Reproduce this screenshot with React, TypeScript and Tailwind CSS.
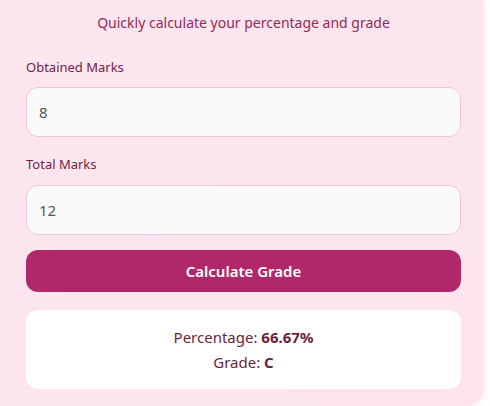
import React, { useState } from 'react';

export default function App() {
  const [obtained, setObtained] = useState('8');
  const [total, setTotal] = useState('12');
  const [result, setResult] = useState<{ pct: string; grade: string } | null>({ pct: '66.67', grade: 'C' });

  const calculate = () => {
    const o = parseFloat(obtained);
    const t = parseFloat(total);
    if (!t || isNaN(o)) return;
    const p = (o / t) * 100;
    let g = 'F';
    if (p >= 90) g = 'A+';
    else if (p >= 80) g = 'A';
    else if (p >= 70) g = 'B';
    else if (p >= 60) g = 'C';
    else if (p >= 50) g = 'D';
    setResult({ pct: p.toFixed(2), grade: g });
  };

  return (
    <div className="w-[490px] h-[406px] overflow-hidden bg-white" style={{ fontFamily: '"Noto Sans", "Open Sans", sans-serif' }}>
      <div className="w-[483px] h-[406px] rounded-br-2xl bg-gradient-to-br from-[#fde6ef] to-[#fde4ee] shadow-[0_0_8px_rgba(244,170,200,0.35)] pl-[26px] pr-[22px] pt-[12px]">
        <p className="text-center text-[14px] leading-[22px] text-[#932a57]">Quickly calculate your percentage and grade</p>

        <label className="block mt-[23px] text-[13px] leading-[20px] text-[#6e2445]">Obtained Marks</label>
        <input
          value={obtained}
          onChange={(e) => setObtained(e.target.value)}
          className="mt-[10px] block w-full h-[50px] rounded-xl border border-[#f1c4d7] bg-[#fafafa] px-[12px] text-[15px] text-[#555] outline-none"
        />

        <label className="block mt-[17px] text-[13px] leading-[20px] text-[#6e2445]">Total Marks</label>
        <input
          value={total}
          onChange={(e) => setTotal(e.target.value)}
          className="mt-[11px] block w-full h-[50px] rounded-xl border border-[#f1c4d7] bg-[#fafafa] px-[12px] text-[15px] text-[#555] outline-none"
        />

        <button
          onClick={calculate}
          className="mt-[15px] block w-full h-[42px] rounded-xl bg-[#b0286a] text-white font-semibold text-[15px]"
        >
          Calculate Grade
        </button>

        <div className="mt-[18px] h-[79px] rounded-xl bg-white flex flex-col items-center justify-center text-[15px] leading-[25px] text-[#6b1f40]">
          {result && (
            <>
              <div>Percentage: <b>{result.pct}%</b></div>
              <div>Grade: <b>{result.grade}</b></div>
            </>
          )}
        </div>
      </div>
    </div>
  );
}
